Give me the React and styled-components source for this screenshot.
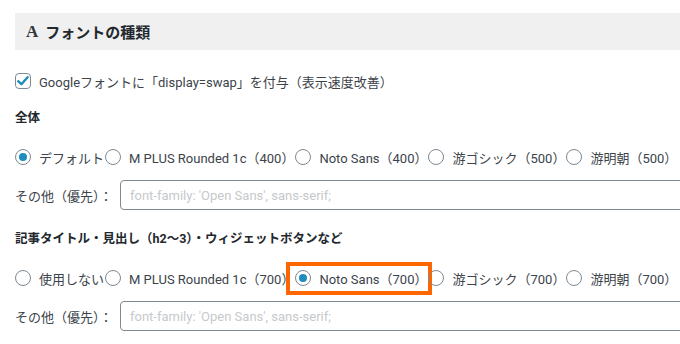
import React from "react"
import styled, { createGlobalStyle } from "styled-components"

const GlobalStyle = createGlobalStyle`
  body {
    margin: 0;
    background: #ffffff;
    overflow: hidden;
    font-family: Roboto, "Noto Sans CJK JP", sans-serif;
    color: #3c434a;
  }
`

const rowsTop = [
  { id: "default", label: "デフォルト", checked: true },
  { id: "mplus", label: "M PLUS Rounded 1c（400）" },
  { id: "noto", label: "Noto Sans（400）" },
  { id: "yugo", label: "游ゴシック（500）" },
  { id: "yumin", label: "游明朝（500）" },
]

const rowsTitle = [
  { id: "none", label: "使用しない" },
  { id: "mplus", label: "M PLUS Rounded 1c（700）" },
  { id: "noto", label: "Noto Sans（700）", checked: true, marked: true },
  { id: "yugo", label: "游ゴシック（700）" },
  { id: "yumin", label: "游明朝（700）" },
]

const Radio = ({ checked }) => (
  <RadioDot $checked={checked} />
)

const RadioRow = ({ items }) => (
  <Choices>
    {items.map((item) => (
      <Choice key={item.id} $marked={item.marked}>
        <Radio checked={item.checked} />
        <span>{item.label}</span>
      </Choice>
    ))}
  </Choices>
)

const OtherField = () => (
  <FieldRow>
    <FieldLabel>その他（優先）：</FieldLabel>
    <TextInput placeholder="font-family: 'Open Sans', sans-serif;" />
  </FieldRow>
)

const App = () => {
  return (
    <>
      <GlobalStyle />
      <Page>
        <SectionHead>
          <HeadIcon>A</HeadIcon>
          フォントの種類
        </SectionHead>

        <CheckRow>
          <CheckBox>
            <svg width="14" height="14" viewBox="0 0 14 14">
              <path
                d="M2.2 7.2 L5.4 10.2 L11.6 3.2"
                fill="none"
                stroke="#1e8cbe"
                strokeWidth="2.4"
                strokeLinecap="round"
                strokeLinejoin="round"
              />
            </svg>
          </CheckBox>
          <span>Googleフォントに「display=swap」を付与（表示速度改善）</span>
        </CheckRow>

        <GroupTitle>全体</GroupTitle>
        <RadioRow items={rowsTop} />
        <OtherField />

        <GroupTitle>記事タイトル・見出し（h2〜3）・ウィジェットボタンなど</GroupTitle>
        <RadioRow items={rowsTitle} />
        <OtherField />
      </Page>
    </>
  )
}

const Page = styled.div`
  width: 720px;
  padding: 13px 0 0 15px;
  font-size: 13px;
`

const SectionHead = styled.h2`
  margin: 0;
  height: 37px;
  display: flex;
  align-items: center;
  padding-left: 11px;
  background: #f0f0f0;
  font-size: 15px;
  font-weight: 700;
  color: #23282d;
`

const HeadIcon = styled.span`
  font-family: "Liberation Serif", serif;
  font-weight: 700;
  font-size: 17px;
  margin-right: 7px;
  color: #32373c;
`

const CheckRow = styled.label`
  display: flex;
  align-items: center;
  gap: 8px;
  margin-top: 23px;
  height: 16px;
  white-space: nowrap;
`

const CheckBox = styled.span`
  width: 16px;
  height: 16px;
  box-sizing: border-box;
  border: 1px solid #7e8993;
  border-radius: 4px;
  display: flex;
  align-items: center;
  justify-content: center;
  flex-shrink: 0;
`

const GroupTitle = styled.h3`
  margin: 19px 0 0;
  height: 20px;
  line-height: 20px;
  font-size: 12.5px;
  font-weight: 700;
  color: #23282d;
`

const Choices = styled.div`
  display: flex;
  align-items: center;
  margin-top: 19px;
  height: 20px;
  white-space: nowrap;
`

const Choice = styled.label`
  position: relative;
  display: flex;
  align-items: center;
  gap: 8px;
  margin-right: 1px;

  &::after {
    content: "";
    display: ${({ $marked }) => ($marked ? "block" : "none")};
    position: absolute;
    top: -7px;
    bottom: -7px;
    left: -9px;
    right: -5px;
    border: 4px solid #ff6600;
  }
`

const RadioDot = styled.span`
  width: 16px;
  height: 16px;
  box-sizing: border-box;
  border-radius: 50%;
  border: 1px solid #7e8993;
  flex-shrink: 0;
  display: flex;
  align-items: center;
  justify-content: center;

  &::before {
    content: "";
    display: ${({ $checked }) => ($checked ? "block" : "none")};
    width: 8px;
    height: 8px;
    border-radius: 50%;
    background: #1e8cbe;
  }
`

const FieldRow = styled.div`
  display: flex;
  align-items: center;
  margin-top: 13px;
`

const FieldLabel = styled.span`
  width: 105px;
  white-space: nowrap;
`

const TextInput = styled.input`
  flex: 1;
  height: 30px;
  box-sizing: border-box;
  border: 1px solid #7e8993;
  border-radius: 4px;
  padding: 0 9px;
  font-family: Roboto, "Noto Sans CJK JP", sans-serif;
  font-size: 13px;
  color: #32373c;

  &::placeholder {
    color: #c6c9cc;
  }
`

export default App
